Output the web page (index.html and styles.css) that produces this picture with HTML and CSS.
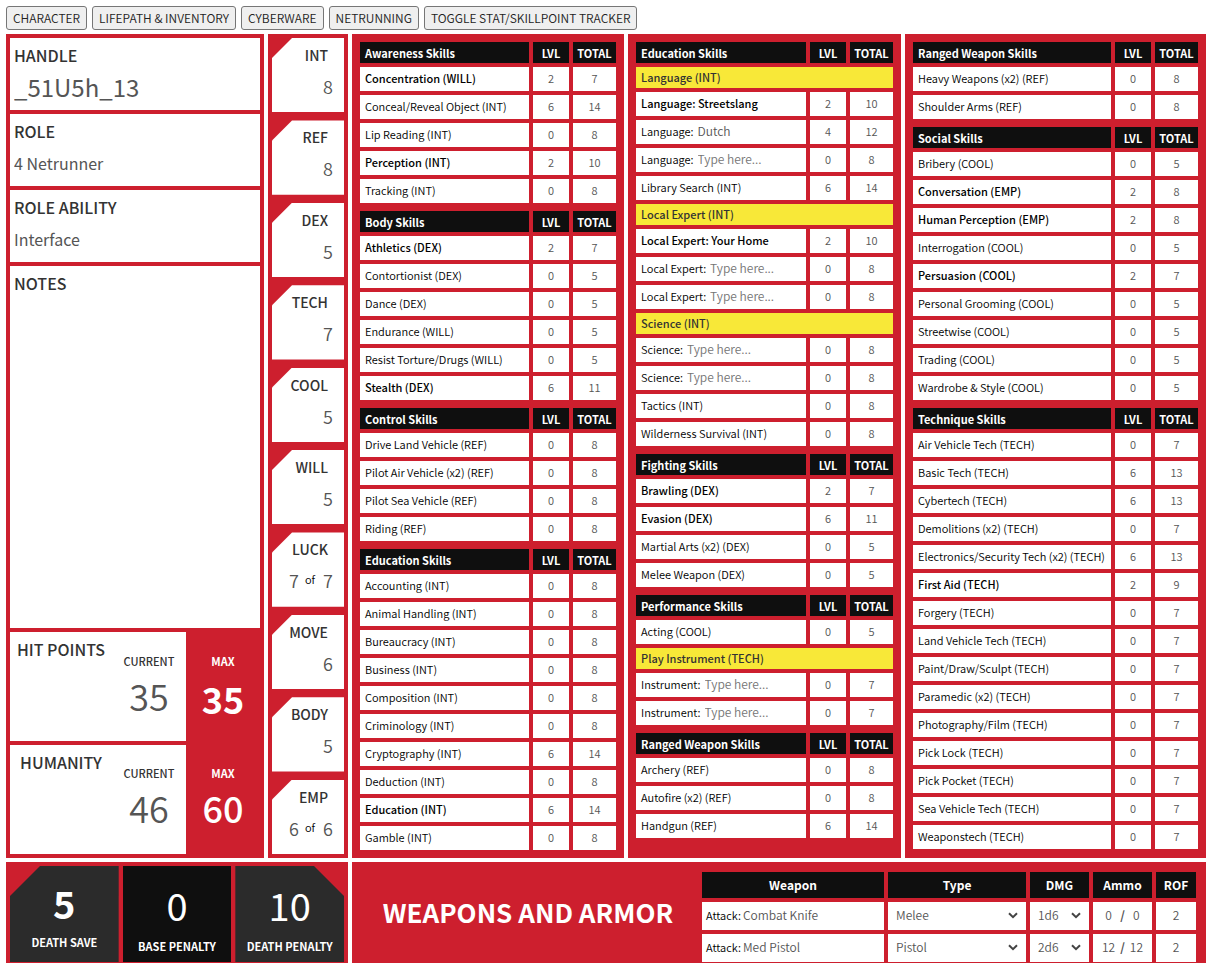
FILE: index.html
```html
<!DOCTYPE html>
<html lang="en">
<head>
<meta charset="utf-8">
<title>Character Sheet</title>
<link rel="stylesheet" href="styles.css">
</head>
<body>
<nav class="tabs">
<button type="button">CHARACTER</button>
<button type="button">LIFEPATH &amp; INVENTORY</button>
<button type="button">CYBERWARE</button>
<button type="button">NETRUNNING</button>
<button type="button">TOGGLE STAT/SKILLPOINT TRACKER</button>
</nav>
<main class="sheet">
<section class="panel bio">
<div class="field"><label for="handle">HANDLE</label><input class="handle" id="handle" value="_51U5h_13"></div>
<div class="field"><label for="role">ROLE</label><input id="role" value="4 Netrunner"></div>
<div class="field"><label for="ability">ROLE ABILITY</label><input id="ability" value="Interface"></div>
<div class="field notes"><label for="notes">NOTES</label><textarea id="notes"></textarea></div>
<div class="pool">
<div class="pool-main"><h2>HIT POINTS</h2><div class="pool-value"><label for="hp">CURRENT</label><input id="hp" value="35"></div></div>
<div class="pool-max strong"><label for="hpmax">MAX</label><input id="hpmax" value="35"></div>
</div>
<div class="pool">
<div class="pool-main"><h2>HUMANITY</h2><div class="pool-value"><label for="hum">CURRENT</label><input id="hum" value="46"></div></div>
<div class="pool-max"><label for="hummax">MAX</label><input id="hummax" value="60"></div>
</div>
</section>
<section class="panel stats">
<div class="stat"><label for="int">INT</label><div class="nums"><input id="int" value="8"></div></div>
<div class="stat"><label for="ref">REF</label><div class="nums"><input id="ref" value="8"></div></div>
<div class="stat"><label for="dex">DEX</label><div class="nums"><input id="dex" value="5"></div></div>
<div class="stat"><label for="tech">TECH</label><div class="nums"><input id="tech" value="7"></div></div>
<div class="stat"><label for="cool">COOL</label><div class="nums"><input id="cool" value="5"></div></div>
<div class="stat"><label for="will">WILL</label><div class="nums"><input id="will" value="5"></div></div>
<div class="stat"><label for="luck">LUCK</label><div class="nums"><input id="luck" value="7"><span>of</span><input aria-label="Max luck" value="7"></div></div>
<div class="stat"><label for="move">MOVE</label><div class="nums"><input id="move" value="6"></div></div>
<div class="stat"><label for="body">BODY</label><div class="nums"><input id="body" value="5"></div></div>
<div class="stat"><label for="emp">EMP</label><div class="nums"><input id="emp" value="6"><span>of</span><input aria-label="Max empathy" value="6"></div></div>
</section>
<section class="panel skills">
<table>
<thead><tr><th>Awareness Skills<th class="lvl">LVL<th class="total">TOTAL</thead>
<tr class="basic"><th><label for="s1">Concentration (WILL)</label><td><input id="s1" value="2"><td>7
<tr><th><label for="s2">Conceal/Reveal Object (INT)</label><td><input id="s2" value="6"><td>14
<tr><th><label for="s3">Lip Reading (INT)</label><td><input id="s3" value="0"><td>8
<tr class="basic"><th><label for="s4">Perception (INT)</label><td><input id="s4" value="2"><td>10
<tr><th><label for="s5">Tracking (INT)</label><td><input id="s5" value="0"><td>8
</table>
<table>
<thead><tr><th>Body Skills<th class="lvl">LVL<th class="total">TOTAL</thead>
<tr class="basic"><th><label for="s6">Athletics (DEX)</label><td><input id="s6" value="2"><td>7
<tr><th><label for="s7">Contortionist (DEX)</label><td><input id="s7" value="0"><td>5
<tr><th><label for="s8">Dance (DEX)</label><td><input id="s8" value="0"><td>5
<tr><th><label for="s9">Endurance (WILL)</label><td><input id="s9" value="0"><td>5
<tr><th><label for="s10">Resist Torture/Drugs (WILL)</label><td><input id="s10" value="0"><td>5
<tr class="basic"><th><label for="s11">Stealth (DEX)</label><td><input id="s11" value="6"><td>11
</table>
<table>
<thead><tr><th>Control Skills<th class="lvl">LVL<th class="total">TOTAL</thead>
<tr><th><label for="s12">Drive Land Vehicle (REF)</label><td><input id="s12" value="0"><td>8
<tr><th><label for="s13">Pilot Air Vehicle (x2) (REF)</label><td><input id="s13" value="0"><td>8
<tr><th><label for="s14">Pilot Sea Vehicle (REF)</label><td><input id="s14" value="0"><td>8
<tr><th><label for="s15">Riding (REF)</label><td><input id="s15" value="0"><td>8
</table>
<table>
<thead><tr><th>Education Skills<th class="lvl">LVL<th class="total">TOTAL</thead>
<tr><th><label for="s16">Accounting (INT)</label><td><input id="s16" value="0"><td>8
<tr><th><label for="s17">Animal Handling (INT)</label><td><input id="s17" value="0"><td>8
<tr><th><label for="s18">Bureaucracy (INT)</label><td><input id="s18" value="0"><td>8
<tr><th><label for="s19">Business (INT)</label><td><input id="s19" value="0"><td>8
<tr><th><label for="s20">Composition (INT)</label><td><input id="s20" value="0"><td>8
<tr><th><label for="s21">Criminology (INT)</label><td><input id="s21" value="0"><td>8
<tr><th><label for="s22">Cryptography (INT)</label><td><input id="s22" value="6"><td>14
<tr><th><label for="s23">Deduction (INT)</label><td><input id="s23" value="0"><td>8
<tr class="basic"><th><label for="s24">Education (INT)</label><td><input id="s24" value="6"><td>14
<tr><th><label for="s25">Gamble (INT)</label><td><input id="s25" value="0"><td>8
</table>
</section>
<section class="panel skills">
<table>
<thead><tr><th>Education Skills<th class="lvl">LVL<th class="total">TOTAL</thead>
<tr class="group"><th colspan="3">Language (INT)
<tr class="basic"><th><label for="s26">Language: Streetslang</label><td><input id="s26" value="2"><td>10
<tr><th><div class="named"><label for="n27">Language:</label><input id="n27" placeholder="Type here..." value="Dutch"></div><td><input aria-label="Dutch level" value="4"><td>12
<tr><th><div class="named"><label for="n28">Language:</label><input id="n28" placeholder="Type here..."></div><td><input aria-label="Language level" value="0"><td>8
<tr><th><label for="s29">Library Search (INT)</label><td><input id="s29" value="6"><td>14
<tr class="group"><th colspan="3">Local Expert (INT)
<tr class="basic"><th><label for="s30">Local Expert: Your Home</label><td><input id="s30" value="2"><td>10
<tr><th><div class="named"><label for="n31">Local Expert:</label><input id="n31" placeholder="Type here..."></div><td><input aria-label="Local expert level" value="0"><td>8
<tr><th><div class="named"><label for="n32">Local Expert:</label><input id="n32" placeholder="Type here..."></div><td><input aria-label="Local expert level" value="0"><td>8
<tr class="group"><th colspan="3">Science (INT)
<tr><th><div class="named"><label for="n33">Science:</label><input id="n33" placeholder="Type here..."></div><td><input aria-label="Science level" value="0"><td>8
<tr><th><div class="named"><label for="n34">Science:</label><input id="n34" placeholder="Type here..."></div><td><input aria-label="Science level" value="0"><td>8
<tr><th><label for="s35">Tactics (INT)</label><td><input id="s35" value="0"><td>8
<tr><th><label for="s36">Wilderness Survival (INT)</label><td><input id="s36" value="0"><td>8
</table>
<table>
<thead><tr><th>Fighting Skills<th class="lvl">LVL<th class="total">TOTAL</thead>
<tr class="basic"><th><label for="s37">Brawling (DEX)</label><td><input id="s37" value="2"><td>7
<tr class="basic"><th><label for="s38">Evasion (DEX)</label><td><input id="s38" value="6"><td>11
<tr><th><label for="s39">Martial Arts (x2) (DEX)</label><td><input id="s39" value="0"><td>5
<tr><th><label for="s40">Melee Weapon (DEX)</label><td><input id="s40" value="0"><td>5
</table>
<table>
<thead><tr><th>Performance Skills<th class="lvl">LVL<th class="total">TOTAL</thead>
<tr><th><label for="s41">Acting (COOL)</label><td><input id="s41" value="0"><td>5
<tr class="group"><th colspan="3">Play Instrument (TECH)
<tr><th><div class="named"><label for="n42">Instrument:</label><input id="n42" placeholder="Type here..."></div><td><input aria-label="Instrument level" value="0"><td>7
<tr><th><div class="named"><label for="n43">Instrument:</label><input id="n43" placeholder="Type here..."></div><td><input aria-label="Instrument level" value="0"><td>7
</table>
<table>
<thead><tr><th>Ranged Weapon Skills<th class="lvl">LVL<th class="total">TOTAL</thead>
<tr><th><label for="s44">Archery (REF)</label><td><input id="s44" value="0"><td>8
<tr><th><label for="s45">Autofire (x2) (REF)</label><td><input id="s45" value="0"><td>8
<tr><th><label for="s46">Handgun (REF)</label><td><input id="s46" value="6"><td>14
</table>
</section>
<section class="panel skills">
<table>
<thead><tr><th>Ranged Weapon Skills<th class="lvl">LVL<th class="total">TOTAL</thead>
<tr><th><label for="s47">Heavy Weapons (x2) (REF)</label><td><input id="s47" value="0"><td>8
<tr><th><label for="s48">Shoulder Arms (REF)</label><td><input id="s48" value="0"><td>8
</table>
<table>
<thead><tr><th>Social Skills<th class="lvl">LVL<th class="total">TOTAL</thead>
<tr><th><label for="s49">Bribery (COOL)</label><td><input id="s49" value="0"><td>5
<tr class="basic"><th><label for="s50">Conversation (EMP)</label><td><input id="s50" value="2"><td>8
<tr class="basic"><th><label for="s51">Human Perception (EMP)</label><td><input id="s51" value="2"><td>8
<tr><th><label for="s52">Interrogation (COOL)</label><td><input id="s52" value="0"><td>5
<tr class="basic"><th><label for="s53">Persuasion (COOL)</label><td><input id="s53" value="2"><td>7
<tr><th><label for="s54">Personal Grooming (COOL)</label><td><input id="s54" value="0"><td>5
<tr><th><label for="s55">Streetwise (COOL)</label><td><input id="s55" value="0"><td>5
<tr><th><label for="s56">Trading (COOL)</label><td><input id="s56" value="0"><td>5
<tr><th><label for="s57">Wardrobe &amp; Style (COOL)</label><td><input id="s57" value="0"><td>5
</table>
<table>
<thead><tr><th>Technique Skills<th class="lvl">LVL<th class="total">TOTAL</thead>
<tr><th><label for="s58">Air Vehicle Tech (TECH)</label><td><input id="s58" value="0"><td>7
<tr><th><label for="s59">Basic Tech (TECH)</label><td><input id="s59" value="6"><td>13
<tr><th><label for="s60">Cybertech (TECH)</label><td><input id="s60" value="6"><td>13
<tr><th><label for="s61">Demolitions (x2) (TECH)</label><td><input id="s61" value="0"><td>7
<tr><th><label for="s62">Electronics/Security Tech (x2) (TECH)</label><td><input id="s62" value="6"><td>13
<tr class="basic"><th><label for="s63">First Aid (TECH)</label><td><input id="s63" value="2"><td>9
<tr><th><label for="s64">Forgery (TECH)</label><td><input id="s64" value="0"><td>7
<tr><th><label for="s65">Land Vehicle Tech (TECH)</label><td><input id="s65" value="0"><td>7
<tr><th><label for="s66">Paint/Draw/Sculpt (TECH)</label><td><input id="s66" value="0"><td>7
<tr><th><label for="s67">Paramedic (x2) (TECH)</label><td><input id="s67" value="0"><td>7
<tr><th><label for="s68">Photography/Film (TECH)</label><td><input id="s68" value="0"><td>7
<tr><th><label for="s69">Pick Lock (TECH)</label><td><input id="s69" value="0"><td>7
<tr><th><label for="s70">Pick Pocket (TECH)</label><td><input id="s70" value="0"><td>7
<tr><th><label for="s71">Sea Vehicle Tech (TECH)</label><td><input id="s71" value="0"><td>7
<tr><th><label for="s72">Weaponstech (TECH)</label><td><input id="s72" value="0"><td>7
</table>
</section>
<section class="panel death">
<div class="save cut-left strong"><input id="dsave" value="5"><label for="dsave">DEATH SAVE</label></div>
<div class="save base"><input id="bpen" value="0"><label for="bpen">BASE PENALTY</label></div>
<div class="save cut-right"><input id="dpen" value="10"><label for="dpen">DEATH PENALTY</label></div>
</section>
<section class="panel weapons">
<h1>WEAPONS AND ARMOR</h1>
<table>
<thead><tr><th>Weapon<th class="w-type">Type<th class="w-dmg">DMG<th class="w-dmg">Ammo<th class="w-rof">ROF</thead>
<tr>
<td><div class="named"><label for="w1">Attack:</label><input id="w1" value="Combat Knife"></div>
<td><select aria-label="Type"><option>Melee</option><option>Pistol</option></select>
<td><select aria-label="Damage"><option>1d6</option><option>2d6</option></select>
<td><div class="ammo"><input aria-label="Ammo" value="0"><b>/</b><input aria-label="Ammo max" value="0"></div>
<td><input aria-label="ROF" value="2">
<tr>
<td><div class="named"><label for="w2">Attack:</label><input id="w2" value="Med Pistol"></div>
<td><select aria-label="Type"><option>Melee</option><option selected>Pistol</option></select>
<td><select aria-label="Damage"><option>1d6</option><option selected>2d6</option></select>
<td><div class="ammo"><input aria-label="Ammo" value="12"><b>/</b><input aria-label="Ammo max" value="12"></div>
<td><input aria-label="ROF" value="2">
</table>
</section>
</main>
</body>
</html>
```
FILE: styles.css
```css
:root {
  --red: #cd1f2e;
  --black: #0f0f0f;
  --dark: #2b2b2b;
  --yellow: #f8e838;
  --ink: #333;
  --value: #555;
}

* {
  box-sizing: border-box;
}

body {
  margin: 0;
  padding: 6px 12px 0 6px;
  background: #fff;
  color: #000;
  font: 350 11px/20px "Noto Sans CJK JP", "Noto Sans CJK SC", sans-serif;
}

input,
textarea,
select {
  display: block;
  width: 100%;
  min-width: 0;
  margin: 0;
  padding: 0;
  border: 0;
  background: transparent;
  color: var(--value);
  font: inherit;
}

.tabs {
  display: flex;
  gap: 5px;
  margin-bottom: 4px;
}

.tabs button {
  height: 24px;
  padding: 0 6px;
  border: 1px solid #767676;
  border-radius: 3px;
  background: #efefef;
  color: #222;
  font: 350 12px/20px "Noto Sans CJK JP", sans-serif;
}

.sheet {
  display: grid;
  grid-template-columns: 258px 80px minmax(0, 272fr) minmax(0, 273fr) minmax(0, 301fr);
  gap: 4px;
}

.panel {
  background: var(--red);
  padding: 4px;
}

/* Identity column */
.bio {
  display: flex;
  flex-direction: column;
  gap: 4px;
}

.field {
  height: 72px;
  padding: 4px;
  background: #fff;
}

.field label,
.pool h2 {
  display: block;
  margin: 0;
  color: var(--ink);
  font-size: 16px;
  font-weight: 500;
  line-height: 26px;
}

.field input {
  height: 38px;
  font-size: 16px;
  font-weight: 400;
}

.field .handle {
  height: 36px;
  font-size: 24px;
}

.notes {
  flex: 1;
  display: flex;
  flex-direction: column;
}

.notes textarea {
  flex: 1;
  resize: none;
}

.pool {
  display: flex;
  height: 109px;
}

.pool-main {
  display: flex;
  width: 176px;
  padding: 4px 8px 4px 4px;
  background: #fff;
}

.pool-main h2 {
  flex: 1;
  margin-right: 12px;
  text-align: center;
  white-space: nowrap;
}

.pool-value,
.pool-max {
  padding-top: 15px;
  text-align: center;
  font-weight: 500;
  color: var(--ink);
}

.pool-value {
  width: 58px;
}

.pool-max {
  flex: 1;
  padding-top: 19px;
  color: #fff;
  font-weight: 700;
}

.pool + .pool .pool-value {
  padding-top: 14px;
}

.pool + .pool .pool-max {
  padding-top: 18px;
}

.pool input {
  height: 48px;
  text-align: center;
  font-size: 36px;
  font-weight: 350;
}

.pool-max input {
  color: #fff;
  font-weight: 500;
}

.pool-max.strong input {
  height: 54px;
  font-weight: 700;
}

/* Stats column */
.stats {
  display: grid;
  grid-auto-rows: 1fr;
  gap: 8px;
}

.stat {
  padding: 4px 11px 0 4px;
  background: #fff;
  clip-path: polygon(20px 0, 100% 0, 100% 100%, 0 100%, 0 20px);
  text-align: right;
}

.stat label {
  display: block;
  padding-right: 5px;
  color: var(--ink);
  font-size: 14px;
  font-weight: 500;
  line-height: 26px;
}

.nums {
  display: flex;
  justify-content: flex-end;
  gap: 6px;
}

.nums input {
  width: 12px;
  height: 36px;
  text-align: right;
  font-size: 18px;
}

.nums span {
  line-height: 34px;
}

/* Tables */
table {
  width: 100%;
  table-layout: fixed;
  border-spacing: 4px;
}

th,
td {
  height: 24px;
  padding: 0 0 2px;
  background: #fff;
  overflow: hidden;
  white-space: nowrap;
}

th {
  padding-left: 5px;
  text-align: left;
  font-weight: 350;
}

td {
  text-align: center;
  color: var(--value);
}

td input {
  text-align: center;
}

.skills thead th {
  height: 21px;
  padding-bottom: 0;
  background: var(--black);
  color: #fff;
  font-weight: 700;
}

.skills thead .lvl,
.skills thead .total {
  width: 36px;
  padding: 0;
  text-align: center;
}

.skills thead .total {
  width: 43px;
}

.basic th {
  font-weight: 500;
}

.group th {
  height: 21px;
  padding-bottom: 1px;
  background: var(--yellow);
  color: var(--ink);
  font-weight: 500;
}

.named {
  display: flex;
  gap: 4px;
}

.named label {
  color: #000;
}

.named input {
  flex: 1;
  text-align: left;
  font-size: 12px;
}

.named input::placeholder {
  color: #757575;
}

/* Death saves */
.death {
  grid-column: span 2;
  display: grid;
  grid-template-columns: repeat(3, 1fr);
  gap: 4px;
  padding-bottom: 1px;
}

.save {
  padding-top: 10px;
  background: var(--dark);
  color: #fff;
  text-align: center;
  font-weight: 700;
}

.save.base {
  background: var(--black);
}

.cut-left {
  clip-path: polygon(30px 0, 100% 0, 100% 100%, 0 100%, 0 30px);
}

.cut-right {
  clip-path: polygon(0 0, calc(100% - 30px) 0, 100% 30px, 100% 100%, 0 100%);
}

.save input {
  height: 56px;
  margin-bottom: 4px;
  color: #fff;
  text-align: center;
  font-size: 38px;
  font-weight: 400;
}

.save.strong {
  padding-top: 6px;
}

.save.strong input {
  height: 60px;
  margin-bottom: 0;
  font-weight: 700;
}

/* Weapons */
.weapons {
  grid-column: span 3;
  display: flex;
  padding: 6px 6px 0;
}

.weapons h1 {
  flex: 1;
  align-self: center;
  margin: 0 0 8px;
  color: #fff;
  text-align: center;
  font-size: 26px;
  font-weight: 700;
  line-height: 40px;
}

.weapons table {
  width: 502px;
  margin-bottom: -3px;
  font-size: 12px;
}

.weapons th {
  height: 26px;
  padding: 0;
  background: var(--black);
  color: #fff;
  text-align: center;
  font-weight: 700;
}

.weapons td {
  height: 28px;
}

.weapons .w-type {
  width: 138px;
}

.weapons .w-dmg {
  width: 59px;
}

.weapons .w-rof {
  width: 40px;
}

.weapons select {
  appearance: none;
  padding: 0 8px;
  background: url("data:image/svg+xml,%3Csvg xmlns='http://www.w3.org/2000/svg' width='10' height='7' viewBox='0 0 10 7'%3E%3Cpath d='M1 1.2l4 4 4-4' fill='none' stroke='%23444' stroke-width='2'/%3E%3C/svg%3E") no-repeat right 8px center;
}

.weapons label {
  font-size: 11px;
}

.weapons .named {
  gap: 2px;
  padding-left: 4px;
}

.ammo {
  display: flex;
  padding: 0 4px;
}
```
